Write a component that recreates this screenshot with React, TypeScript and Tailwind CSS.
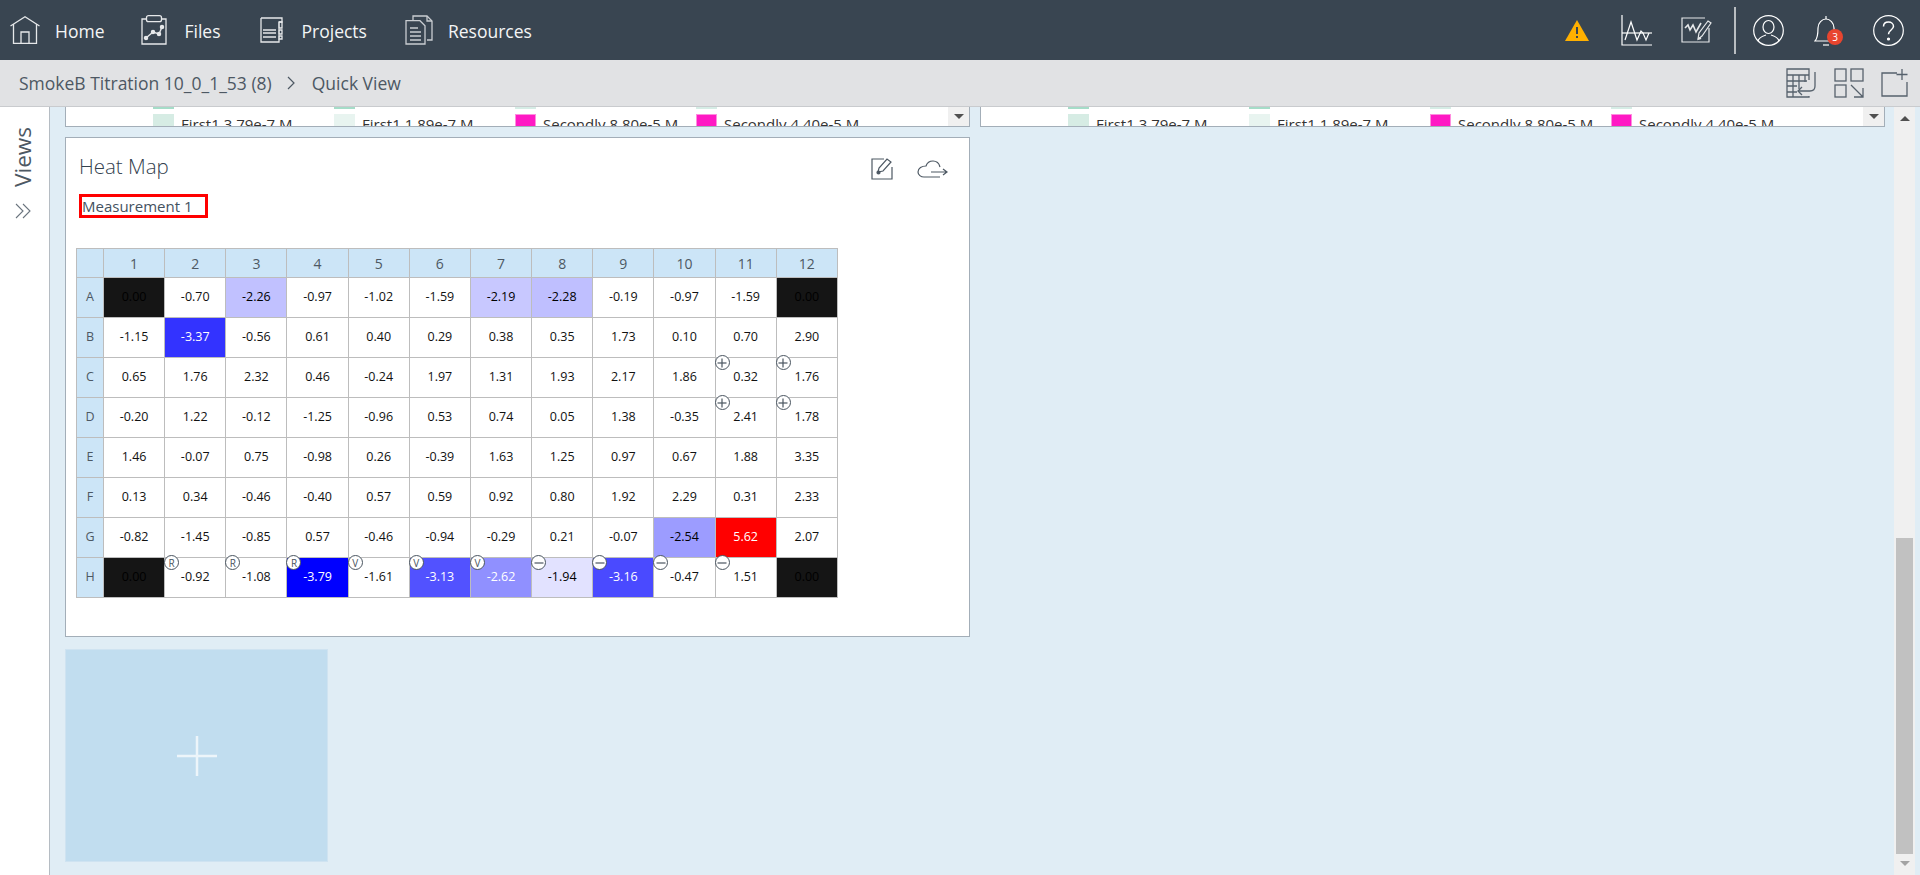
import React from "react";

const rows: [string, string[]][] = [
  ["A", ["0.00","-0.70","-2.26","-0.97","-1.02","-1.59","-2.19","-2.28","-0.19","-0.97","-1.59","0.00"]],
  ["B", ["-1.15","-3.37","-0.56","0.61","0.40","0.29","0.38","0.35","1.73","0.10","0.70","2.90"]],
  ["C", ["0.65","1.76","2.32","0.46","-0.24","1.97","1.31","1.93","2.17","1.86","0.32","1.76"]],
  ["D", ["-0.20","1.22","-0.12","-1.25","-0.96","0.53","0.74","0.05","1.38","-0.35","2.41","1.78"]],
  ["E", ["1.46","-0.07","0.75","-0.98","0.26","-0.39","1.63","1.25","0.97","0.67","1.88","3.35"]],
  ["F", ["0.13","0.34","-0.46","-0.40","0.57","0.59","0.92","0.80","1.92","2.29","0.31","2.33"]],
  ["G", ["-0.82","-1.45","-0.85","0.57","-0.46","-0.94","-0.29","0.21","-0.07","-2.54","5.62","2.07"]],
  ["H", ["0.00","-0.92","-1.08","-3.79","-1.61","-3.13","-2.62","-1.94","-3.16","-0.47","1.51","0.00"]],
];

const fills: Record<string, string> = {
  "A0": "bg-[#151515] text-black", "A11": "bg-[#151515] text-black", "H0": "bg-[#151515] text-black", "H11": "bg-[#151515] text-black",
  "A2": "bg-[#c1c1ff] text-black", "A6": "bg-[#c8c8ff] text-black", "A7": "bg-[#bfbfff] text-black",
  "B1": "bg-[#3333ff] text-white", "H3": "bg-[#0000ff] text-white", "H5": "bg-[#5252ff] text-white",
  "H6": "bg-[#9090ff] text-white", "H7": "bg-[#e2e2ff] text-black", "H8": "bg-[#4a4aff] text-white",
  "G9": "bg-[#9c9cff] text-black", "G10": "bg-[#ff0000] text-white",
};

const badges: Record<string, string> = {
  "C10": "+", "C11": "+", "D10": "+", "D11": "+",
  "H1": "R", "H2": "R", "H3": "R", "H4": "V", "H5": "V", "H6": "V",
  "H7": "-", "H8": "-", "H9": "-", "H10": "-",
};

function Badge({ k }: { k: string }) {
  return (
    <span className="absolute left-[-1px] top-[-3px] z-10 flex h-[15px] w-[15px] items-center justify-center rounded-full border-[1.5px] border-[#4a5560] bg-white text-[10px] leading-none text-[#4a5560]">
      {k === "R" || k === "V" ? k : (
        <svg width="10" height="10" viewBox="0 0 10 10" stroke="#4a5560" strokeWidth="1.2">
          <path d="M0.500 5h9" />
          {k === "+" && <path d="M5 0.500v9" />}
        </svg>
      )}
    </span>
  );
}

const S = "#e6e8ea";

function HomeIcon() {
  return (
    <svg width="30" height="28" viewBox="0 0 30 28" fill="none" stroke={S} strokeWidth="1.3" className="shrink-0">
      <path d="M0.500 10 15 0.800 29.500 10" />
      <path d="M3.500 8v19.300h23V8" />
      <path d="M11 27V16h8v11" />
    </svg>
  );
}
function FilesIcon() {
  return (
    <svg width="26" height="30" viewBox="0 0 26 30" fill="none" stroke={S} strokeWidth="1.3" className="shrink-0">
      <path d="M5 4H1v25h24V4h-4" />
      <rect x="5.500" y="0.700" width="15" height="6" rx="2" />
      <path d="m5 23 7-6 6 2 3-7" strokeWidth="1.4" />
      <circle cx="5" cy="23" r="1.600" fill={S} />
      <circle cx="12" cy="17" r="1.600" fill={S} />
      <circle cx="18" cy="19" r="1.600" fill={S} />
      <circle cx="21" cy="12" r="1.600" fill={S} />
    </svg>
  );
}
function ProjectsIcon() {
  return (
    <svg width="23" height="26" viewBox="0 0 23 26" fill="none" stroke={S} strokeWidth="1.3" className="shrink-0">
      <path d="M1 1h21v4h-3M19 5v0M1 1v24h18v-3" />
      <path d="M19 5h3v6h-3zM19 13h3v4h-3zM19 19h3v3h-3z" />
      <path d="M19 5v17" strokeWidth="0.8" />
      <path d="M3 13h13M3 16h13M3 20h13" />
    </svg>
  );
}
function ResourcesIcon() {
  return (
    <svg width="28" height="30" viewBox="0 0 28 30" fill="none" stroke="#c9cdd1" strokeWidth="1.3" className="shrink-0">
      <path d="M8 5V1h14l5 5v19h-5" />
      <path d="M22 1v5h5" />
      <path d="M1 5.700h14l5 5V29H1z" />
      <path d="M5 13h8M5 17h11M5 21h11M5 25h11" strokeWidth="1.5" />
    </svg>
  );
}
function ChartIcon() {
  return (
    <svg width="31" height="31" viewBox="0 0 31 31" fill="none" stroke="#fff" strokeWidth="1.2">
      <path d="M1 0v30h30" />
      <path d="M1 18h30" />
      <path d="m4 25 6-18 6 18 4-9 2 2 3 7 3-7" />
    </svg>
  );
}
function PenChartIcon() {
  return (
    <svg width="31" height="26" viewBox="0 0 31 26" fill="none" stroke="#e6e8ea" strokeWidth="1.2">
      <path d="M24 1H1v24h27V11" />
      <path d="m4 11 3-3 2 5 3-5 3 7 5-9" strokeWidth="1.6" />
      <path d="m17 22 1-6 9-12 3 2-9 13z" fill="#394551" />
      <path d="m17 22 3-1" strokeWidth="2" />
    </svg>
  );
}
function UserIcon() {
  return (
    <svg width="31" height="31" viewBox="0 0 31 31" fill="none" stroke="#fff" strokeWidth="1.2">
      <circle cx="15.500" cy="15.500" r="14.800" />
      <ellipse cx="15.500" cy="12" rx="5.500" ry="6.500" />
      <path d="M5 26c1-4 5-5 8-6M26 26c-1-4-5-5-8-6" />
    </svg>
  );
}
function BellIcon() {
  return (
    <svg width="24" height="31" viewBox="0 0 24 31" fill="none" stroke="#fff" strokeWidth="1.2">
      <path d="M12 1v3" />
      <path d="M1 26c3-3 3-8 3-13 0-5 4-9 8-9s8 4 8 9c0 5 0 10 3 13z" />
      <path d="M9 30h6" />
    </svg>
  );
}
function HelpIcon() {
  return (
    <svg width="31" height="31" viewBox="0 0 31 31" fill="none" stroke="#fff" strokeWidth="1.2">
      <circle cx="15.500" cy="15.500" r="14.800" />
      <path d="M10.500 11.500c0-3 2.200-4.500 5-4.500s5 1.800 5 4.300c0 3.800-5 3.700-5 8" strokeWidth="1.500" />
      <circle cx="15.500" cy="24" r="1" fill="#fff" />
    </svg>
  );
}
const D = "#56616c";
function TableIcon() {
  return (
    <svg width="31" height="30" viewBox="0 0 31 30" fill="none" stroke={D} strokeWidth="1.3">
      <path d="M23 12V1H1v28h22v-1" />
      <path d="M1 7h22M1 13h20M1 18h10M1 24h10M7 7v22M13 7v14M19 7v7" />
      <path d="M29 4v14c0 4-2 5-5 5H12" />
      <path d="m16 19-4 4 4 4" />
    </svg>
  );
}
function GridIcon() {
  return (
    <svg width="30" height="30" viewBox="0 0 30 30" fill="none" stroke={D} strokeWidth="1.3">
      <rect x="1" y="1" width="11" height="12" />
      <rect x="17" y="1" width="12" height="12" />
      <rect x="1" y="17" width="11" height="12" />
      <path d="m17 17 12 12M29 20v9h-9" />
    </svg>
  );
}
function AddIcon() {
  return (
    <svg width="28" height="28" viewBox="0 0 28 28" fill="none" stroke={D} strokeWidth="1.3">
      <path d="M16 4H1v23h25V13" />
      <path d="M21 0v11M15.500 5.500h11" />
    </svg>
  );
}

function Legend() {
  const items = [
    ["First1 3.79e-7 M", "bg-[#d6ece4]", "bg-[#a5dcc8]"],
    ["First1 1.89e-7 M", "bg-[#e8f4f0]", "bg-[#a5dcc8]"],
    ["Secondly 8.80e-5 M", "bg-[#ff19c4] border border-[#ff8ddf]", "bg-[#d5ece5]"],
    ["Secondly 4.40e-5 M", "bg-[#ff19c4] border border-[#ff8ddf]", "bg-[#d5ece5]"],
  ];
  return (
    <div className="relative h-[20px] w-[905px] shrink-0 overflow-hidden border-b border-r border-l border-[#a3aeb8] bg-white">
      <div className="flex pl-[87px]">
        {items.map(([t, c, top]) => (
          <div key={t} className="w-[181px] shrink-0">
            <div className={`h-[2px] w-[21px] ${top}`} />
            <div className="mt-[5px] flex items-start gap-[7px]">
              <div className={`h-[20px] w-[21px] shrink-0 ${c}`} />
              <span className="mt-[1px] whitespace-nowrap text-[15px] leading-[19px] text-[#333]">{t}</span>
            </div>
          </div>
        ))}
      </div>
      <div className="absolute right-0 top-0 flex h-full w-[21px] items-start justify-center bg-[#f0f0f0] pt-[7px]">
        <div className="h-0 w-0 border-x-[5px] border-t-[5px] border-x-transparent border-t-[#505050]" />
      </div>
    </div>
  );
}

export default function App() {
  return (
    <div className="flex h-screen w-full flex-col overflow-hidden bg-white font-['Open_Sans','Noto_Sans',sans-serif]">
      <header className="flex h-[60px] shrink-0 items-center bg-[#394551] text-white">
        <div className="flex items-center pl-[10px] text-[17.5px] text-[#f4f5f6]">
          <HomeIcon />
          <span className="ml-[15px] mt-[3px]">Home</span>
          <span className="ml-[37px] flex"><FilesIcon /></span>
          <span className="ml-[17px] mt-[3px]">Files</span>
          <span className="ml-[39px] flex"><ProjectsIcon /></span>
          <span className="ml-[19px] mt-[3px]">Projects</span>
          <span className="ml-[38px] flex"><ResourcesIcon /></span>
          <span className="ml-[15px] mt-[3px]">Resources</span>
        </div>
        <div className="ml-auto flex h-full items-center pr-[16px]">
          <svg width="24" height="21" viewBox="0 0 24 21">
            <path d="M12 0 24 21H0z" fill="#ffb000" />
            <path d="M11 7h2v7h-2zM11 16h2v2h-2z" fill="#394551" />
          </svg>
          <span className="ml-[32px] flex"><ChartIcon /></span>
          <span className="ml-[29px] flex"><PenChartIcon /></span>
          <div className="ml-[22px] h-[47px] w-[2px] bg-[#b9bdc1]" />
          <span className="ml-[17px] flex"><UserIcon /></span>
          <span className="relative ml-[30px] flex">
            <BellIcon />
            <span className="absolute left-[13px] top-[14px] flex h-[16px] w-[16px] items-center justify-center rounded-full bg-[#e8452f] text-[10px] leading-none text-white">3</span>
          </span>
          <span className="ml-[35px] flex"><HelpIcon /></span>
        </div>
      </header>

      <div className="flex h-[47px] shrink-0 items-center border-b border-[#c9cbce] bg-[#e1e2e4] text-[#4d5863]">
        <span className="ml-[19px] text-[17.5px]">SmokeB Titration 10_0_1_53 (8)</span>
        <svg width="9" height="14" viewBox="0 0 9 14" fill="none" stroke="#4d5863" strokeWidth="1.2" className="ml-[15px]">
          <path d="m1 1 6 6-6 6" />
        </svg>
        <span className="ml-[16px] text-[17.5px]">Quick View</span>
        <div className="ml-auto flex items-center pr-[11px]">
          <TableIcon />
          <span className="ml-[17px] flex"><GridIcon /></span>
          <span className="ml-[17px] flex"><AddIcon /></span>
        </div>
      </div>

      <div className="flex min-h-0 flex-1">
        <aside className="flex w-[50px] shrink-0 flex-col items-center border-r border-[#b5bcc3] bg-white pr-[3px] pt-[20px] text-[#4d5863]">
          <span className="text-[22.5px] leading-[24px] [writing-mode:vertical-rl] rotate-180">Views</span>
          <svg width="16" height="16" viewBox="0 0 16 16" fill="none" stroke="#6a747e" strokeWidth="1.1" className="mt-[16px]">
            <path d="m1 1 7 7-7 7M8 1l7 7-7 7" />
          </svg>
        </aside>

        <main className="flex min-w-0 flex-1 bg-[#e0edf5]">
          <div className="min-w-0 flex-1 pl-[15px]">
            <div className="flex gap-[10px]">
              <Legend />
              <Legend />
            </div>

            <section className="mt-[10px] h-[500px] w-[905px] border border-[#a3aeb8] bg-white pl-[10px]">
              <div className="flex items-start justify-between pr-[21px] pt-[14px]">
                <h2 className="ml-[3px] text-[20.5px] font-light leading-[28px] text-[#33414e]">Heat Map</h2>
                <div className="flex items-center gap-[24px] pt-[6px]">
                  <svg width="22" height="22" viewBox="0 0 22 22" fill="none" stroke="#4d5863" strokeWidth="1.2">
                    <path d="M13 1H1v20h20V9" />
                    <path d="m7 14 1-4 8-9 4 3-8 9z" />
                    <circle cx="7.500" cy="14.500" r="1.500" fill="#4d5863" />
                  </svg>
                  <svg width="31" height="18" viewBox="0 0 31 18" fill="none" stroke="#4d5863" strokeWidth="1.2">
                    <path d="M23 7c-1-4-4-6-7-6-3 0-6 2-7 5-4 0-8 2-8 6 0 3 3 5 6 5h16" />
                    <path d="M14 12h16m-4-3 4 3-4 3" />
                  </svg>
                </div>
              </div>
              <div className="ml-[3px] mt-[14px] flex h-[24px] w-[129px] items-center border-[3px] border-[#ff0000] pt-[1px] text-[15px] font-medium whitespace-nowrap text-[#44525f]">
                Measurement 1
              </div>
              <table className="mt-[30px] w-[762px] table-fixed border-collapse text-center text-[12.5px] text-[#111]">
                <colgroup>
                  <col className="w-[27px]" />
                  {Array.from({ length: 12 }).map((_, i) => <col key={i} />)}
                </colgroup>
                <thead>
                  <tr className="h-[29px]">
                    <th className="border border-[#bdbdbd] bg-[#cce5f7]" />
                    {Array.from({ length: 12 }).map((_, i) => (
                      <th key={i} className="border border-[#bdbdbd] bg-[#cce5f7] text-[14px] font-normal text-[#4d5863]">{i + 1}</th>
                    ))}
                  </tr>
                </thead>
                <tbody>
                  {rows.map(([label, vals]) => (
                    <tr key={label} className="h-[40px]">
                      <th className="border border-[#bdbdbd] bg-[#cce5f7] text-[12.5px] font-normal text-[#4d5863]">{label}</th>
                      {vals.map((v, i) => {
                        const key = label + i;
                        return (
                          <td key={i} className={`relative border border-[#bdbdbd] p-0 ${fills[key] ?? "bg-white"}`}>
                            {badges[key] && <Badge k={badges[key]} />}
                            {v}
                          </td>
                        );
                      })}
                    </tr>
                  ))}
                </tbody>
              </table>
            </section>

            <div className="mt-[12px] flex h-[213px] w-[263px] items-center justify-center border border-[#cfe3f1] bg-[#c1ddef]">
              <svg width="42" height="42" viewBox="0 0 42 42" stroke="#edf5fa" strokeWidth="2.5">
                <path d="M21 1v40M1 21h40" />
              </svg>
            </div>
          </div>

          <div className="mr-[5px] flex w-[21px] shrink-0 flex-col items-center bg-[#f0f0f0]">
            <div className="mt-[9px] h-0 w-0 border-x-[5px] border-b-[5px] border-x-transparent border-b-[#505050]" />
            <div className="mt-auto h-[316px] w-[17px] bg-[#c1c1c1]" />
            <div className="mb-[9px] mt-[7px] h-0 w-0 border-x-[5px] border-t-[5px] border-x-transparent border-t-[#a3a3a3]" />
          </div>
        </main>
      </div>
    </div>
  );
}
